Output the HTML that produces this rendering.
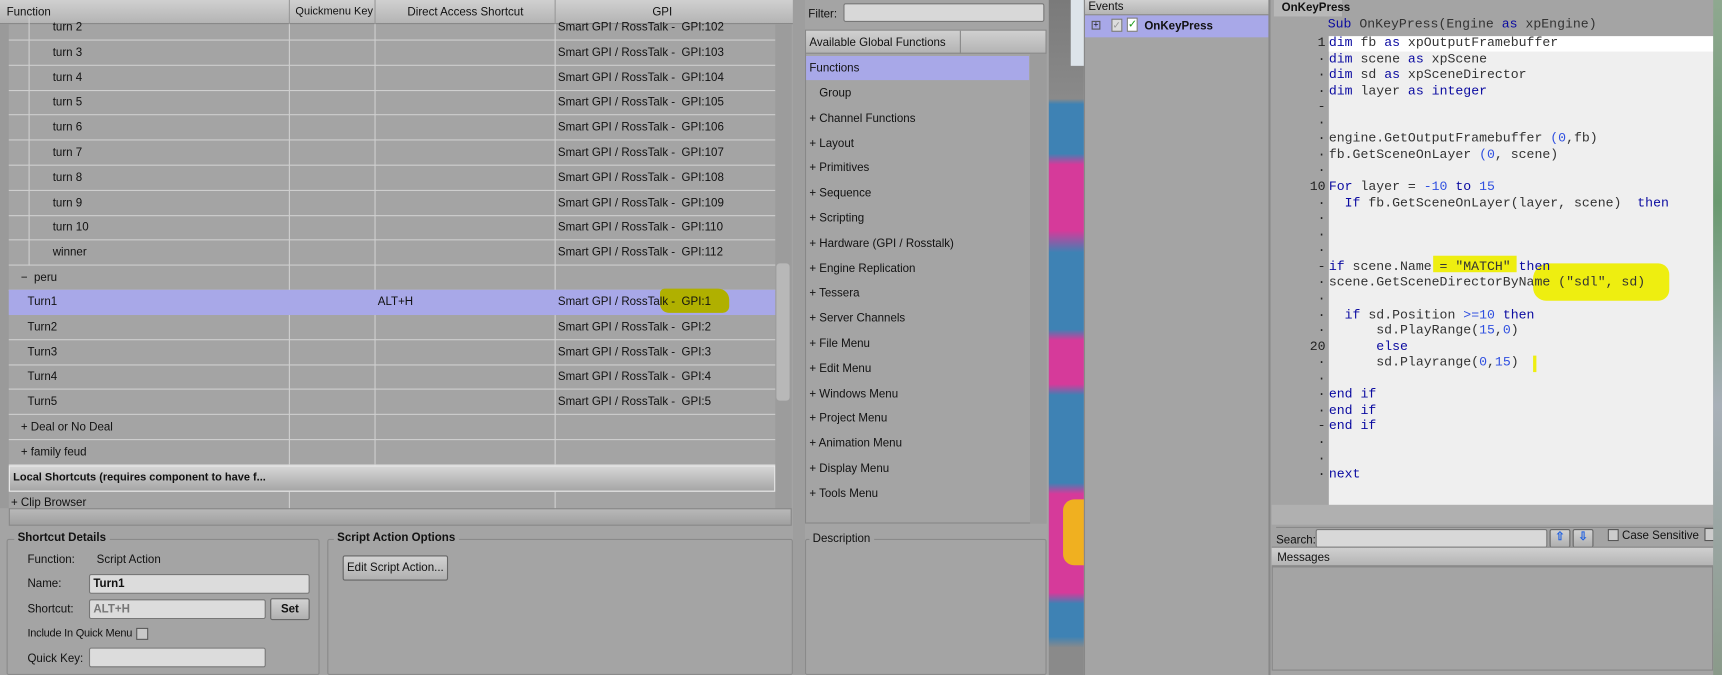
<!DOCTYPE html>
<html><head><meta charset="utf-8"><style>
*{margin:0;padding:0;box-sizing:border-box}
html,body{width:1722px;height:675px;overflow:hidden;background:#a4a4a4}
#w{position:absolute;left:0;top:0;width:1568px;height:615px;transform:scale(1.0982,1.0976);transform-origin:0 0;font:10.5px "Liberation Sans",sans-serif;color:#111}
.a{position:absolute}
.hd{background:linear-gradient(#d0d0d0,#b4b4b4);border-bottom:1px solid #888}
.row{position:absolute;left:8px;width:698px;height:23px;border-bottom:1px solid #cfcfcf;line-height:22px}
.row span{position:absolute}
.li{position:absolute;left:737px;height:23px;line-height:23px}
.code{font:12px "Liberation Mono",monospace;color:#333;white-space:pre}
.k{color:#0a0aa0}.n{color:#3050e0}
.ln{position:absolute;left:1160px;width:47px;text-align:right;font:12px "Liberation Mono",monospace;color:#222}
.inp{position:absolute;background:#dcdcdc;border:1px solid #777;border-radius:2px}
.btn{position:absolute;background:linear-gradient(#d2d2d2,#b0b0b0);border:1px solid #666;border-radius:2px;text-align:center}
.grp{position:absolute;border:1px solid #8a8a8a;border-radius:2px}
.gt{position:absolute;background:#a4a4a4;font-weight:bold;padding:0 3px}
</style></head><body><div id="w">
<div class="a hd" style="left:0;top:0;width:722px;height:22px"></div>
<div class="a" style="left:6px;top:5px">Function</div>
<div class="a" style="left:269px;top:5px;font-size:10px">Quickmenu Key</div>
<div class="a" style="left:371px;top:5px">Direct Access Shortcut</div>
<div class="a" style="left:594px;top:5px">GPI</div>
<div class="a" style="left:263px;top:0;width:1px;height:22px;background:#999"></div>
<div class="a" style="left:341px;top:0;width:1px;height:22px;background:#999"></div>
<div class="a" style="left:505px;top:0;width:1px;height:22px;background:#999"></div>
<div class="a" style="left:0;top:22px;width:8px;height:441px;background:#9a9a9a"></div>
<div id="rows"></div>
<div class="a" style="left:263px;top:22px;width:1px;height:402px;background:#cfcfcf"></div>
<div class="a" style="left:341px;top:22px;width:1px;height:402px;background:#cfcfcf"></div>
<div class="a" style="left:505px;top:22px;width:1px;height:402px;background:#cfcfcf"></div>
<div class="a" style="left:8px;top:264px;width:698px;height:23px;background:#a8a8e8"></div>
<div class="a" style="left:25px;top:269px">Turn1</div><div class="a" style="left:344px;top:269px">ALT+H</div>
<div class="a" style="left:601px;top:263px;width:63px;height:22px;background:#b0b000;border-radius:4px 10px 6px 8px"></div>
<div class="a" style="left:508px;top:269px">Smart GPI / RossTalk -&nbsp; GPI:1</div>
<div class="a" style="left:8px;top:424px;width:698px;height:24px;background:linear-gradient(#d6d6d6,#a6a6a6);border:1px solid #eee;font-weight:bold;line-height:22px;padding-left:3px;font-size:10px">Local Shortcuts (requires component to have f...</div>
<div class="a" style="left:10px;top:452px">+ Clip Browser</div>
<div class="a" style="left:263px;top:448px;width:1px;height:16px;background:#cfcfcf"></div>
<div class="a" style="left:505px;top:448px;width:1px;height:16px;background:#cfcfcf"></div>
<div class="a" style="left:706px;top:22px;width:15px;height:441px;background:#9c9c9c"></div>
<div class="a" style="left:707px;top:240px;width:12px;height:125px;background:#b8b8b8;border-radius:3px"></div>
<div class="a" style="left:8px;top:463px;width:713px;height:16px;background:linear-gradient(#b8b8b8,#a0a0a0);border:1px solid #888"></div>
<div class="grp" style="left:6px;top:491px;width:285px;height:124px"></div><div class="gt" style="left:13px;top:484px">Shortcut Details</div>
<div class="a" style="left:25px;top:504px">Function:</div><div class="a" style="left:88px;top:504px">Script Action</div>
<div class="a" style="left:25px;top:526px">Name:</div><div class="inp" style="top:523px;height:18px;font-weight:bold;padding:2px 3px;left:81px;width:201px">Turn1</div>
<div class="a" style="left:25px;top:549px">Shortcut:</div><div class="inp" style="left:81px;top:546px;width:161px;height:18px;color:#777;font-weight:bold;padding:2px 3px">ALT+H</div>
<div class="btn" style="left:246px;top:545px;width:36px;height:20px;font-weight:bold;line-height:18px">Set</div>
<div class="a" style="left:25px;top:572px;font-size:10px;letter-spacing:-0.2px">Include In Quick Menu</div><div class="a" style="left:124px;top:572px;width:11px;height:11px;border:1px solid #555;background:#c8c8c8"></div>
<div class="a" style="left:25px;top:594px">Quick Key:</div><div class="inp" style="left:81px;top:590px;width:161px;height:18px"></div>
<div class="grp" style="left:298px;top:491px;width:424px;height:124px"></div><div class="gt" style="left:304px;top:484px">Script Action Options</div>
<div class="btn" style="left:312px;top:506px;width:96px;height:23px;line-height:21px">Edit Script Action...</div>
<div class="grp" style="left:733px;top:491px;width:220px;height:124px"></div><div class="gt" style="left:737px;top:485px;font-weight:normal">Description</div>
<div class="a" style="left:722px;top:0;width:11px;height:615px;background:#9e9e9e"></div>
<div class="a" style="left:736px;top:7px">Filter:</div>
<div class="inp" style="left:768px;top:3px;width:183px;height:17px;background:#d8d8d8"></div>
<div class="a" style="left:733px;top:27px;width:220px;height:450px;border:1px solid #888"></div>
<div class="a hd" style="left:734px;top:28px;width:218px;height:21px"></div>
<div class="a" style="left:737px;top:33px">Available Global Functions</div>
<div class="a" style="left:874px;top:28px;width:1px;height:21px;background:#888"></div>
<div class="a" style="left:734px;top:51px;width:203px;height:22px;background:#a8a8e8"></div>
<div id="mid"></div>
<div class="a" style="left:938px;top:49px;width:15px;height:428px;background:#9c9c9c"></div>
<div class="a" style="left:955px;top:0;width:32px;height:615px;background:linear-gradient(#7a7a7a 0,#8a8a8a 90px,#3e82b4 95px,#3e82b4 140px,#d63a9a 150px,#d63a9a 210px,#3e82b4 230px,#3e82b4 300px,#d63a9a 310px,#d63a9a 350px,#3e82b4 360px,#3e82b4 440px,#d63a9a 450px,#d63a9a 540px,#3e82b4 550px,#3e82b4 580px,#8a8a8a 590px)"></div>
<div class="a" style="left:975px;top:0;width:12px;height:60px;background:#dde4ea"></div>
<div class="a" style="left:968px;top:455px;width:19px;height:60px;background:#f0b020;border-radius:10px 0 0 10px"></div>
<div class="a" style="left:987px;top:0;width:170px;height:615px;background:#a4a4a4;border-left:1px solid #888"></div>
<div class="a hd" style="left:988px;top:0;width:167px;height:14px"></div>
<div class="a" style="left:991px;top:0">Events</div>
<div class="a" style="left:988px;top:14px;width:167px;height:20px;background:#a8a8e8"></div>
<div class="a" style="left:994px;top:19px;width:8px;height:8px;border:1px solid #555;font-size:8px;line-height:6px;text-align:center">+</div>
<div class="a" style="left:1012px;top:17px;width:10px;height:12px;border:1px solid #777;background:#ddd;color:#999;font-size:9px;line-height:10px">✓</div>
<div class="a" style="left:1026px;top:16px;width:10px;height:13px;background:#fff;border:1px solid #777;color:#1a9a1a;font-size:10px;line-height:11px">✓</div>
<div class="a" style="left:1042px;top:18px;font-weight:bold">OnKeyPress</div>
<div class="a" style="left:1155px;top:0;width:2px;height:615px;background:#888"></div>
<div class="a" style="left:1157px;top:0;width:403px;height:615px;background:#a4a4a4"></div>
<div class="a" style="left:1160px;top:0;width:62px;height:15px;background:#b8b8b8"></div>
<div class="a" style="left:1167px;top:1px;font-weight:bold">OnKeyPress</div>
<div class="a" style="left:1210px;top:33px;width:350px;height:427px;background:#efefef"></div>
<div class="a" style="left:1210px;top:33px;width:350px;height:14px;background:#fff"></div>
<div class="a" style="left:1305px;top:233px;width:76px;height:15px;background:#eeee10"></div>
<div class="a" style="left:1396px;top:240px;width:124px;height:34px;background:#eeee10;border-radius:14px 10px 10px 12px"></div>
<div class="a" style="left:1396px;top:324px;width:3px;height:15px;background:#eeee10"></div>
<div id="code"></div>
<div class="a" style="left:1158px;top:460px;width:402px;height:18px;background:#b0b0b0"></div>
<div class="a" style="left:1162px;top:480px;width:398px;height:1px;background:#888"></div>
<div class="a" style="left:1162px;top:486px">Search:</div>
<div class="inp" style="left:1198px;top:482px;width:211px;height:17px;background:#d8d8d8"></div>
<div class="btn" style="left:1411px;top:482px;width:19px;height:17px;color:#2060e0;font-weight:bold">⇧</div>
<div class="btn" style="left:1432px;top:482px;width:19px;height:17px;color:#2060e0;font-weight:bold">⇩</div>
<div class="a" style="left:1464px;top:482px;width:10px;height:11px;border:1px solid #555;background:#ccc"></div>
<div class="a" style="left:1477px;top:482px">Case Sensitive</div>
<div class="a" style="left:1552px;top:481px;width:10px;height:12px;border:1px solid #555;background:#ccc"></div>
<div class="a hd" style="left:1158px;top:498px;width:402px;height:18px;border-top:1px solid #888"></div>
<div class="a" style="left:1163px;top:502px">Messages</div>
<div class="a" style="left:1158px;top:516px;width:402px;height:95px;border:1px solid #888"></div>
<div class="a" style="left:1560px;top:0;width:8px;height:615px;background:linear-gradient(#8fa890,#6a9a70 30%,#a8b0b8 60%,#8a9a8a)"></div>
</div>
<script>
var r='',t=['turn 2','turn 3','turn 4','turn 5','turn 6','turn 7','turn 8','turn 9','turn 10','winner'],g=[102,103,104,105,106,107,108,109,110,112];
for(var i=0;i<10;i++){var y=14+i*22.8;r+='<div class="row" style="top:'+y+'px"><span style="left:40px">'+t[i]+'</span><span style="left:500px">Smart GPI / RossTalk -&nbsp; GPI:'+g[i]+'</span></div><div class="a" style="left:26px;top:'+y+'px;width:1px;height:23px;background:#cfcfcf"></div>';}
r+='<div class="row" style="top:242px"><span style="left:11px">−&nbsp; peru</span></div>';
for(var j=2;j<=5;j++){var y=264+(j-1)*22.8;r+='<div class="row" style="top:'+y+'px"><span style="left:17px">Turn'+j+'</span><span style="left:500px">Smart GPI / RossTalk -&nbsp; GPI:'+j+'</span></div>';}
r+='<div class="row" style="top:378px"><span style="left:11px">+ Deal or No Deal</span></div><div class="row" style="top:401px"><span style="left:11px">+ family feud</span></div>';
document.getElementById('rows').innerHTML=r;
var m=['Group','+ Channel Functions','+ Layout','+ Primitives','+ Sequence','+ Scripting','+ Hardware (GPI / Rosstalk)','+ Engine Replication','+ Tessera','+ Server Channels','+ File Menu','+ Edit Menu','+ Windows Menu','+ Project Menu','+ Animation Menu','+ Display Menu','+ Tools Menu'],s='<div class="li" style="top:51px">Functions</div>';
for(var i=0;i<m.length;i++){s+='<div class="li" style="top:'+(74+i*22.8)+'px;left:'+(i==0?746:737)+'px">'+m[i]+'</div>';}
document.getElementById('mid').innerHTML=s;
function K(x){return '<span class="k">'+x+'</span>'}function N(x){return '<span class="n">'+x+'</span>'}
var c=[K('dim')+' fb '+K('as')+' xpOutputFramebuffer',K('dim')+' scene '+K('as')+' xpScene',K('dim')+' sd '+K('as')+' xpSceneDirector',K('dim')+' layer '+K('as')+' '+K('integer'),'','','engine.GetOutputFramebuffer '+N('(0')+',fb)','fb.GetSceneOnLayer '+N('(0')+', scene)','',K('For')+' layer = '+N('-10')+' '+K('to')+' '+N('15'),'  '+K('If')+' fb.GetSceneOnLayer(layer, scene)  '+K('then'),'','','',K('if')+' scene.Name = "MATCH" '+K('then'),'scene.GetSceneDirectorByName ("sdl", sd)','','  '+K('if')+' sd.Position '+N('&gt;=10')+' '+K('then'),'      sd.PlayRange('+N('15')+','+N('0')+')','      '+K('else'),'      sd.Playrange('+N('0')+','+N('15')+')','',K('end if'),K('end if'),K('end if'),'','',K('next')];
var h='<div class="a code" style="left:1209px;top:15px">'+K('Sub')+' OnKeyPress(Engine '+K('as')+' xpEngine)</div>';
for(var i=0;i<c.length;i++){var y=32+i*14.56;h+='<div class="a code" style="left:1210px;top:'+y+'px">'+c[i]+'</div>';var l=(i==0?'1':i==9?'10':i==19?'20':(i==4||i==14||i==24)?'-':'·');h+='<div class="ln" style="top:'+y+'px;line-height:15px">'+l+'</div>';}
document.getElementById('code').innerHTML=h;
</script>
</body></html>
